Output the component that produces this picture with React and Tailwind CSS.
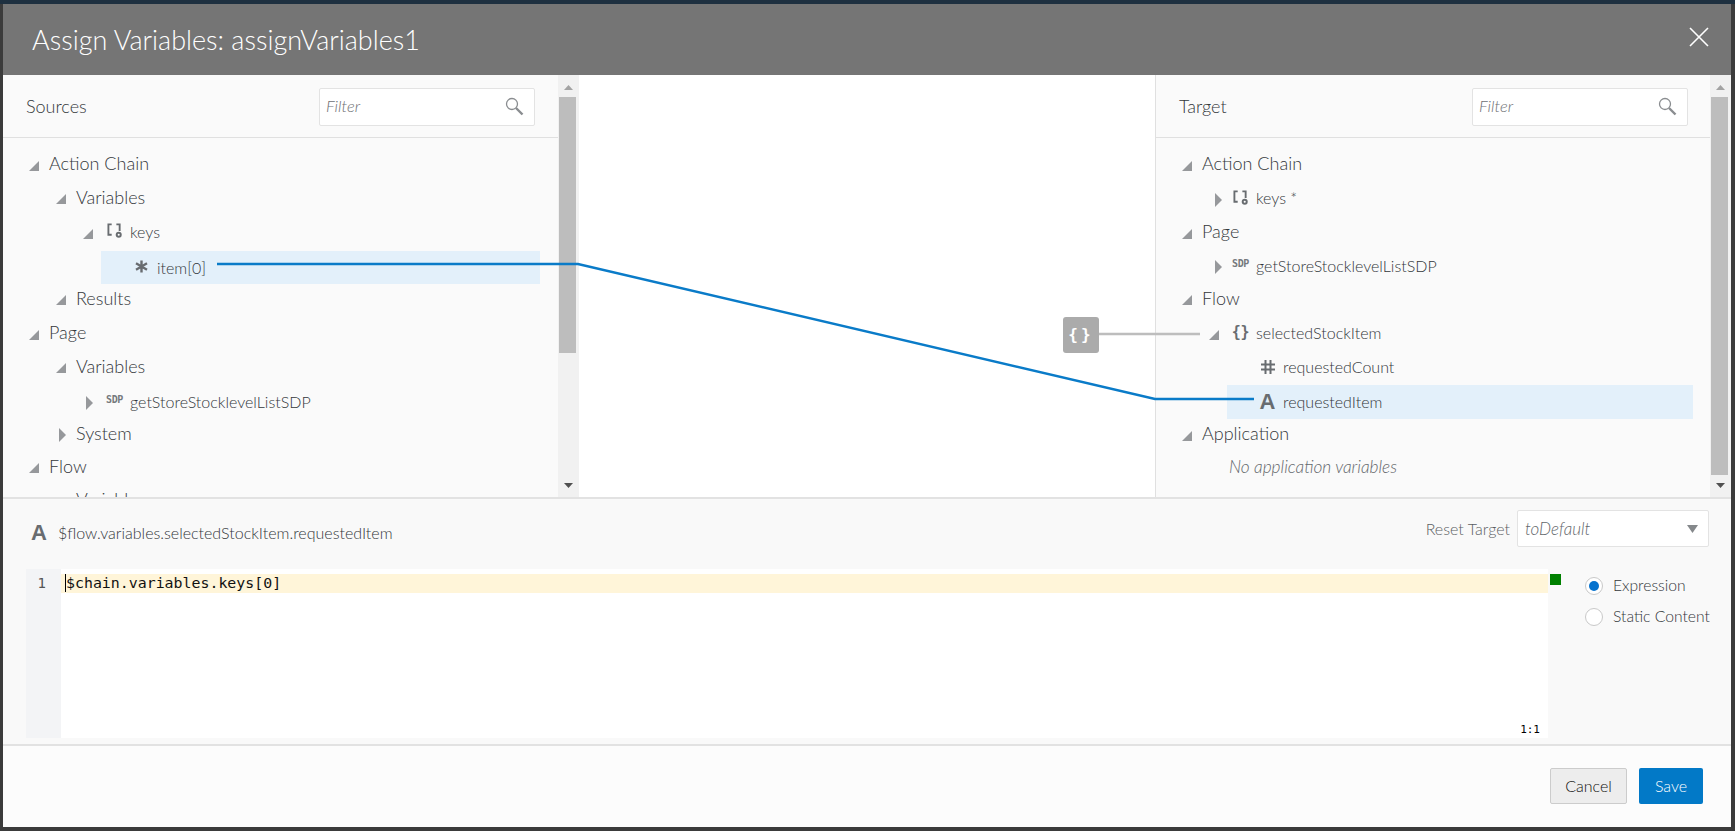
import React from 'react';

const ExpandedCaret = () => (
  <svg width="10" height="10" viewBox="0 0 10 10" className="shrink-0 block mt-[4px]">
    <polygon points="0,10 10,10 10,0" fill="#96989b" />
  </svg>
);

const CollapsedCaret = () => (
  <svg width="10" height="14" viewBox="0 0 10 14" className="shrink-0 block mt-[3px]">
    <polygon points="3,0 10,7 3,14" fill="#96989b" />
  </svg>
);

const ArrayIcon = () => (
  <svg width="16" height="17" viewBox="0 0 16 17" className="block -mt-[2px]">
    <path d="M5 2H1.5v11H5" fill="none" stroke="#686c70" strokeWidth="2" />
    <path d="M10 2h3.5v7" fill="none" stroke="#686c70" strokeWidth="2" />
    <circle cx="12.5" cy="13" r="3.2" fill="#686c70" />
    <circle cx="12.5" cy="13" r="1.1" fill="#ffffff" />
  </svg>
);

const StarIcon = () => (
  <svg width="13" height="13" viewBox="0 0 13 13" className="block -mt-[2px]">
    <path d="M6.5 0.5v12M1 3.3l11 6.4M12 3.3L1 9.7" stroke="#686c70" strokeWidth="2.4" />
  </svg>
);

const HashIcon = () => (
  <svg width="14" height="14" viewBox="0 0 14 14" className="block">
    <path d="M4.5 0v14M9.5 0v14M0 4.5h14M0 9.5h14" stroke="#686c70" strokeWidth="2" />
  </svg>
);

const SearchIcon = () => (
  <svg width="19" height="19" viewBox="0 0 19 19" className="block">
    <circle cx="7" cy="7" r="5.5" fill="none" stroke="#8a8d90" strokeWidth="1.3" />
    <path d="M11 11l6.5 6.5" stroke="#8a8d90" strokeWidth="2.4" />
  </svg>
);

const SdpIcon = () => (
  <span className="block [font-family:'DejaVu_Sans_Mono',monospace] font-bold text-[10px] leading-[10px] tracking-[-0.4px] text-[#75797d] -mt-[4px]">SDP</span>
);

const BraceIcon = () => (
  <span className="block [font-family:'DejaVu_Sans_Mono',monospace] font-bold text-[15px] leading-[16px] tracking-[-0.3px] text-[#686c70] -mt-[2px]">{'{}'}</span>
);

const LetterIcon = () => (
  <span className="block font-bold text-[22px] leading-[20px] [font-family:'Liberation_Sans',sans-serif] text-[#686c70]">A</span>
);

const Row = ({ pad, caret, icon, iconBox = 'w-[15px] mr-[8px]', caretBox = 'w-[10px] mr-[10px]', outer = '', text = 'text-[18px] text-[#33373b]', children }) => (
  <div className={`flex items-center h-[33.6px] ${pad} ${outer}`}>
    {caret && <span className={`flex items-center shrink-0 ${caretBox}`}>{caret === 'open' ? <ExpandedCaret /> : <CollapsedCaret />}</span>}
    {icon && <span className={`flex justify-center shrink-0 ${iconBox}`}>{icon}</span>}
    <span className={`whitespace-nowrap ${text}`}>{children}</span>
  </div>
);

const leaf = 'text-[16px] text-[#33373b]';

const FilterBox = ({ width }) => (
  <div className={`flex items-center justify-between h-[38px] mt-[1px] bg-white border border-[#e3e3e3] rounded-[2px] pl-[6px] pr-[10px] ${width}`}>
    <span className="italic text-[16.5px] text-[#6d7074]">Filter</span>
    <SearchIcon />
  </div>
);

const Scrollbar = ({ thumb }) => (
  <div className="flex flex-col shrink-0 w-[21px] h-full bg-[#f1f1f1]">
    <div className="flex justify-center pt-[10px] h-[22px] shrink-0">
      <svg width="9" height="5" viewBox="0 0 9 5" className="block"><polygon points="0,5 9,5 4.5,0" fill="#a3a3a3" /></svg>
    </div>
    <div className={`ml-[1px] w-[17px] bg-[#bdbdbd] shrink-0 ${thumb}`} />
    <div className="flex-1" />
    <div className="flex justify-center pb-[9px] shrink-0">
      <svg width="9" height="5" viewBox="0 0 9 5" className="block"><polygon points="0,0 9,0 4.5,5" fill="#505050" /></svg>
    </div>
  </div>
);

export default function App() {
  return (
    <div className="relative flex flex-col w-full h-[831px] overflow-hidden bg-[#3b3b3b] text-[16px] [font-family:Lato,sans-serif] font-light">
      <div className="h-[4px] shrink-0 bg-[#1e3040]" />

      <div className="flex flex-col ml-[3px] w-[1728px] h-[823px]">
        {/* Title bar */}
        <div className="flex items-center justify-between h-[71px] shrink-0 bg-[#757575] pl-[29px] pr-[22px]">
          <h1 className="text-[27px] mt-[1px] text-white font-light">Assign Variables: assignVariables1</h1>
          <svg width="20" height="20" viewBox="0 0 20 20" className="block -mt-[5px]">
            <path d="M1 1l18 18M19 1L1 19" stroke="#ffffff" strokeWidth="1.6" />
          </svg>
        </div>

        {/* Mapper */}
        <div className="flex h-[424px] shrink-0 border-b-2 border-[#e2e2e2]">
          <div className="w-[555px] shrink-0 overflow-hidden bg-[#fafafa]">
            <div className="flex items-center justify-between h-[63px] border-b border-[#e0e0e0] pl-[23px] pr-[23px]">
              <span className="text-[18px] mt-[1px] text-[#33373b]">Sources</span>
              <FilterBox width="w-[216px]" />
            </div>
            <div className="pt-[9px]">
              <Row pad="pl-[26px]" caret="open">Action Chain</Row>
              <Row pad="pl-[53px]" caret="open">Variables</Row>
              <Row pad="pl-[80px]" caret="open" caretBox="w-[10px] mr-[14px]" icon={<ArrayIcon />} text={leaf} outer="mt-[1px] -mb-[1px]">keys</Row>
              <Row pad="pl-[34px]" outer="ml-[98px] w-[439px] bg-[#e3f0fa] mt-[3px] -mb-[3px]" icon={<StarIcon />} iconBox="w-[13px] mr-[9px]" text={leaf}>item[0]</Row>
              <Row pad="pl-[53px]" caret="open">Results</Row>
              <Row pad="pl-[26px]" caret="open" outer="mt-[1px] -mb-[1px]">Page</Row>
              <Row pad="pl-[53px]" caret="open" outer="mt-[1px] -mb-[1px]">Variables</Row>
              <Row pad="pl-[80px]" caret="closed" caretBox="w-[10px] mr-[14px]" icon={<SdpIcon />} text={leaf} outer="mt-[3px] -mb-[3px]">getStoreStocklevelListSDP</Row>
              <Row pad="pl-[53px]" caret="closed" outer="mt-[1px] -mb-[1px]">System</Row>
              <Row pad="pl-[26px]" caret="open">Flow</Row>
              <Row pad="pl-[53px]" caret="open">Variables</Row>
            </div>
          </div>
          <Scrollbar thumb="h-[256px]" />

          <div className="flex-1 bg-white" />

          <div className="w-[555px] shrink-0 overflow-hidden bg-[#fafafa] border-l border-[#e0e0e0]">
            <div className="flex items-center justify-between h-[63px] border-b border-[#e0e0e0] pl-[23px] pr-[22px]">
              <span className="text-[18px] mt-[1px] text-[#33373b]">Target</span>
              <FilterBox width="w-[216px]" />
            </div>
            <div className="pt-[9px]">
              <Row pad="pl-[26px]" caret="open">Action Chain</Row>
              <Row pad="pl-[56px]" caret="closed" caretBox="w-[10px] mr-[11px]" icon={<ArrayIcon />} text={leaf} outer="mt-[1px] -mb-[1px]">keys *</Row>
              <Row pad="pl-[26px]" caret="open" outer="mt-[1px] -mb-[1px]">Page</Row>
              <Row pad="pl-[56px]" caret="closed" caretBox="w-[10px] mr-[11px]" icon={<SdpIcon />} text={leaf} outer="mt-[1px] -mb-[1px]">getStoreStocklevelListSDP</Row>
              <Row pad="pl-[26px]" caret="open">Flow</Row>
              <Row pad="pl-[53px]" caret="open" caretBox="w-[10px] mr-[14px]" icon={<BraceIcon />} text={leaf} outer="mt-[1px] -mb-[1px]">selectedStockItem</Row>
              <Row pad="pl-[105px]" icon={<HashIcon />} iconBox="w-[14px] mr-[8px]" text={leaf} outer="mt-[2px] -mb-[2px]">requestedCount</Row>
              <Row pad="pl-[33px]" outer="ml-[71px] w-[466px] bg-[#e3f0fa] mt-[3px] -mb-[3px]" icon={<LetterIcon />} iconBox="w-[15px] mr-[8px]" text={leaf}>requestedItem</Row>
              <Row pad="pl-[26px]" caret="open" outer="mt-[1px] -mb-[1px]">Application</Row>
              <Row pad="pl-[73px]" text="italic text-[17.3px] text-[#63676b]" outer="mt-[1px]">No application variables</Row>
            </div>
          </div>
          <Scrollbar thumb="h-[378px]" />
        </div>

        {/* Expression editor */}
        <div className="h-[247px] shrink-0 bg-[#f9f9f9] border-b-2 border-[#e2e2e2] flex flex-col">
          <div className="flex items-start justify-between h-[70px] shrink-0 pt-[11px] pl-[28px] pr-[22px]">
            <div className="flex items-center mt-[11px]">
              <span className="block w-[15px] mr-[12px]"><LetterIcon /></span>
              <span className="text-[16px] text-[#33373b]">$flow.variables.selectedStockItem.requestedItem</span>
            </div>
            <div className="flex items-center">
              <span className="text-[16px] text-[#5b5f63] mr-[7px]">Reset Target</span>
              <div className="flex items-center justify-between w-[192px] h-[37px] bg-white border border-[#e3e3e3] rounded-[2px] pl-[7px] pr-[10px]">
                <span className="italic text-[17px] text-[#63676b]">toDefault</span>
                <svg width="11" height="8" viewBox="0 0 11 8" className="block"><polygon points="0,0 11,0 5.5,8" fill="#85888b" /></svg>
              </div>
            </div>
          </div>

          <div className="flex pl-[23px]">
            <div className="relative flex w-[1522px] h-[169px] bg-white">
              <div className="w-[35px] shrink-0 h-full bg-[#f3f4f6] pt-[5px] pr-[15px] text-right [font-family:'DejaVu_Sans_Mono',monospace] font-normal text-[14px] leading-[19px] text-[#555]">1</div>
              <div className="flex-1 pt-[5px]">
                <div className="h-[19px] bg-[#fff5d9] pl-[4px] [font-family:'DejaVu_Sans_Mono',monospace] font-normal text-[14.9px] leading-[19px] text-[#111] whitespace-nowrap">
                  <span className="border-l border-black">$chain.variables.keys[0]</span>
                </div>
              </div>
              <span className="absolute right-[8px] bottom-[1px] [font-family:'DejaVu_Sans_Mono',monospace] font-normal text-[11px] leading-[14px] text-black">1:1</span>
            </div>
            <div className="w-[11px] h-[11px] mt-[5px] ml-[2px] shrink-0 bg-[#008000]" />
            <div className="flex flex-col gap-[12px] ml-[24px] pt-[7px] text-[15.7px] text-[#33373b]">
              <label className="flex items-center h-[19px]">
                <span className="flex items-center justify-center w-[18px] h-[18px] mr-[10px] rounded-full bg-white border border-[#c9c9c9]">
                  <span className="block w-[10px] h-[10px] rounded-full bg-[#0572ce]" />
                </span>
                Expression
              </label>
              <label className="flex items-center h-[19px] whitespace-nowrap">
                <span className="block w-[18px] h-[18px] mr-[10px] rounded-full bg-white border border-[#c9c9c9]" />
                Static Content
              </label>
            </div>
          </div>
        </div>

        {/* Footer */}
        <div className="flex flex-1 items-start justify-end gap-[12px] bg-[#fcfcfc] pt-[22px] pr-[28px]">
          <button className="w-[77px] h-[36px] bg-[#ededed] border border-[#cccccc] rounded-[2px] text-[16px] font-light text-[#111]">Cancel</button>
          <button className="w-[64px] h-[36px] bg-[#0279c7] rounded-[2px] text-[16px] font-light text-white">Save</button>
        </div>
      </div>

      {/* Connection lines, drawn over the panes */}
      <svg width="1735" height="831" className="absolute inset-0 pointer-events-none">
        <path d="M1098 334H1200" stroke="#bdbdbd" strokeWidth="2.5" fill="none" />
        <path d="M217 264H578L1155 399H1254" stroke="#0a7bc8" strokeWidth="2.5" fill="none" />
      </svg>
      <div className="absolute left-[1063px] top-[317px] flex items-center justify-center w-[36px] h-[36px] rounded-[3px] bg-[#ababab] [font-family:'DejaVu_Sans_Mono',monospace] font-bold text-[16px] tracking-[3px] text-white">{'{}'}</div>
    </div>
  );
}
